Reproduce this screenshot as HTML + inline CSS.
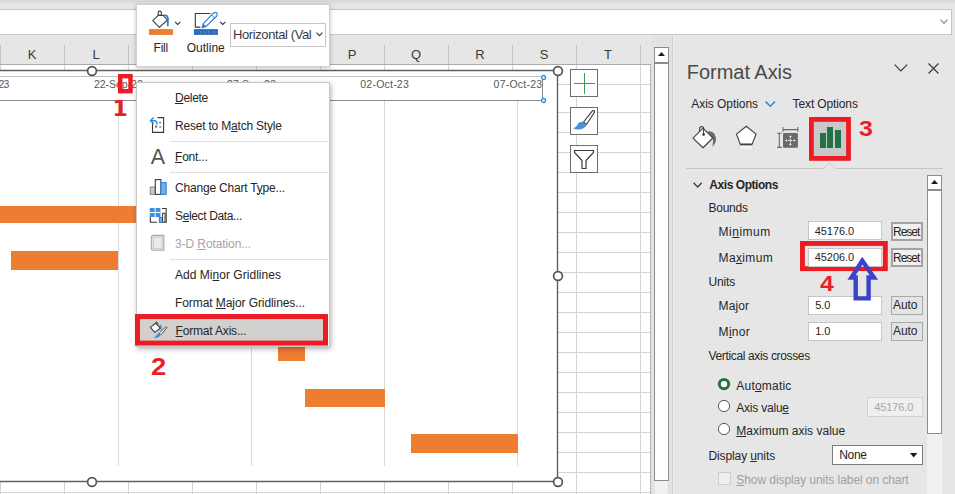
<!DOCTYPE html>
<html><head><meta charset="utf-8"><title>Format Axis</title>
<style>
html,body{margin:0;padding:0;}
body{width:955px;height:494px;overflow:hidden;position:relative;background:#e6e6e6;font-family:"Liberation Sans",sans-serif;}
.t{position:absolute;white-space:pre;}
.r{position:absolute;box-sizing:border-box;}
svg{position:absolute;overflow:visible;}
u{text-decoration:underline;text-underline-offset:1px;text-decoration-thickness:1px;}
</style></head><body>
<div class="r" style="left:0px;top:0px;width:955px;height:2px;background:#d8d8d8;"></div>
<div class="r" style="left:0px;top:2px;width:955px;height:2px;background:#e1e1e1;"></div>
<div class="r" style="left:-2px;top:9px;width:954px;height:26px;background:#fff;border:1px solid #c6c6c6;"></div>
<svg style="left:940px;top:19px" width="8" height="6"><path d="M0.5 0.8 L4 4.3 L7.5 0.8" fill="none" stroke="#9a9a9a" stroke-width="1.3"/></svg>
<div class="r" style="left:0px;top:65px;width:651px;height:429px;background:#fff;"></div>
<div class="r" style="left:0px;top:35px;width:651px;height:29px;background:#e6e6e6;"></div>
<div class="r" style="left:0px;top:64px;width:651px;height:1px;background:#ababab;"></div>
<span class="t" style="left:-118.00px;width:300px;text-align:center;top:45.50px;font-size:13px;line-height:17px;color:#3a3a3a;font-weight:400;">K</span>
<span class="t" style="left:-54.00px;width:300px;text-align:center;top:45.50px;font-size:13px;line-height:17px;color:#3a3a3a;font-weight:400;">L</span>
<span class="t" style="left:10.00px;width:300px;text-align:center;top:45.50px;font-size:13px;line-height:17px;color:#3a3a3a;font-weight:400;">M</span>
<span class="t" style="left:74.00px;width:300px;text-align:center;top:45.50px;font-size:13px;line-height:17px;color:#3a3a3a;font-weight:400;">N</span>
<span class="t" style="left:138.00px;width:300px;text-align:center;top:45.50px;font-size:13px;line-height:17px;color:#3a3a3a;font-weight:400;">O</span>
<span class="t" style="left:202.00px;width:300px;text-align:center;top:45.50px;font-size:13px;line-height:17px;color:#3a3a3a;font-weight:400;">P</span>
<span class="t" style="left:266.00px;width:300px;text-align:center;top:45.50px;font-size:13px;line-height:17px;color:#3a3a3a;font-weight:400;">Q</span>
<span class="t" style="left:330.00px;width:300px;text-align:center;top:45.50px;font-size:13px;line-height:17px;color:#3a3a3a;font-weight:400;">R</span>
<span class="t" style="left:394.00px;width:300px;text-align:center;top:45.50px;font-size:13px;line-height:17px;color:#3a3a3a;font-weight:400;">S</span>
<span class="t" style="left:458.00px;width:300px;text-align:center;top:45.50px;font-size:13px;line-height:17px;color:#3a3a3a;font-weight:400;">T</span>
<div class="r" style="left:0px;top:45px;width:1px;height:19px;background:#c4c4c4;"></div>
<div class="r" style="left:0px;top:65px;width:1px;height:429px;background:#d4d4d4;"></div>
<div class="r" style="left:64px;top:45px;width:1px;height:19px;background:#c4c4c4;"></div>
<div class="r" style="left:64px;top:65px;width:1px;height:429px;background:#d4d4d4;"></div>
<div class="r" style="left:128px;top:45px;width:1px;height:19px;background:#c4c4c4;"></div>
<div class="r" style="left:128px;top:65px;width:1px;height:429px;background:#d4d4d4;"></div>
<div class="r" style="left:192px;top:45px;width:1px;height:19px;background:#c4c4c4;"></div>
<div class="r" style="left:192px;top:65px;width:1px;height:429px;background:#d4d4d4;"></div>
<div class="r" style="left:256px;top:45px;width:1px;height:19px;background:#c4c4c4;"></div>
<div class="r" style="left:256px;top:65px;width:1px;height:429px;background:#d4d4d4;"></div>
<div class="r" style="left:320px;top:45px;width:1px;height:19px;background:#c4c4c4;"></div>
<div class="r" style="left:320px;top:65px;width:1px;height:429px;background:#d4d4d4;"></div>
<div class="r" style="left:384px;top:45px;width:1px;height:19px;background:#c4c4c4;"></div>
<div class="r" style="left:384px;top:65px;width:1px;height:429px;background:#d4d4d4;"></div>
<div class="r" style="left:448px;top:45px;width:1px;height:19px;background:#c4c4c4;"></div>
<div class="r" style="left:448px;top:65px;width:1px;height:429px;background:#d4d4d4;"></div>
<div class="r" style="left:512px;top:45px;width:1px;height:19px;background:#c4c4c4;"></div>
<div class="r" style="left:512px;top:65px;width:1px;height:429px;background:#d4d4d4;"></div>
<div class="r" style="left:576px;top:45px;width:1px;height:19px;background:#c4c4c4;"></div>
<div class="r" style="left:576px;top:65px;width:1px;height:429px;background:#d4d4d4;"></div>
<div class="r" style="left:640px;top:45px;width:1px;height:19px;background:#c4c4c4;"></div>
<div class="r" style="left:640px;top:65px;width:1px;height:429px;background:#d4d4d4;"></div>
<div class="r" style="left:0px;top:84px;width:651px;height:1px;background:#d4d4d4;"></div>
<div class="r" style="left:0px;top:112px;width:651px;height:1px;background:#d4d4d4;"></div>
<div class="r" style="left:0px;top:132px;width:651px;height:1px;background:#d4d4d4;"></div>
<div class="r" style="left:0px;top:152px;width:651px;height:1px;background:#d4d4d4;"></div>
<div class="r" style="left:0px;top:172px;width:651px;height:1px;background:#d4d4d4;"></div>
<div class="r" style="left:0px;top:192px;width:651px;height:1px;background:#d4d4d4;"></div>
<div class="r" style="left:0px;top:212px;width:651px;height:1px;background:#d4d4d4;"></div>
<div class="r" style="left:0px;top:232px;width:651px;height:1px;background:#d4d4d4;"></div>
<div class="r" style="left:0px;top:252px;width:651px;height:1px;background:#d4d4d4;"></div>
<div class="r" style="left:0px;top:272px;width:651px;height:1px;background:#d4d4d4;"></div>
<div class="r" style="left:0px;top:292px;width:651px;height:1px;background:#d4d4d4;"></div>
<div class="r" style="left:0px;top:312px;width:651px;height:1px;background:#d4d4d4;"></div>
<div class="r" style="left:0px;top:332px;width:651px;height:1px;background:#d4d4d4;"></div>
<div class="r" style="left:0px;top:352px;width:651px;height:1px;background:#d4d4d4;"></div>
<div class="r" style="left:0px;top:372px;width:651px;height:1px;background:#d4d4d4;"></div>
<div class="r" style="left:0px;top:392px;width:651px;height:1px;background:#d4d4d4;"></div>
<div class="r" style="left:0px;top:412px;width:651px;height:1px;background:#d4d4d4;"></div>
<div class="r" style="left:0px;top:432px;width:651px;height:1px;background:#d4d4d4;"></div>
<div class="r" style="left:0px;top:452px;width:651px;height:1px;background:#d4d4d4;"></div>
<div class="r" style="left:0px;top:472px;width:651px;height:1px;background:#d4d4d4;"></div>
<div class="r" style="left:0px;top:492px;width:651px;height:1px;background:#d4d4d4;"></div>
<div class="r" style="left:650px;top:64px;width:1px;height:430px;background:#b4b4b4;"></div>
<div class="r" style="left:651px;top:35px;width:21px;height:459px;background:#e3e3e3;"></div>
<div class="r" style="left:654px;top:47px;width:15px;height:16px;background:#fff;border:1px solid #8c8c8c;"></div>
<svg style="left:658px;top:52px" width="7" height="4"><path d="M0 4 L3.5 0 L7 4 Z" fill="#1a1a1a"/></svg>
<div class="r" style="left:654px;top:62px;width:15px;height:419px;background:#fff;border:1px solid #8c8c8c;border-top-width:2px;"></div>
<div class="r" style="left:655px;top:481px;width:13px;height:13px;background:#f1f1f1;"></div>
<div class="r" style="left:668px;top:481px;width:1px;height:13px;background:#dcdcdc;"></div>
<div class="r" style="left:-373px;top:70px;width:931px;height:412px;background:#fff;"></div>
<svg style="left:0;top:60px" width="570" height="434"><path d="M-5 10.5 H557.5 V421.5 H-5" fill="none" stroke="#606060" stroke-width="1.4"/></svg>
<div class="r" style="left:118px;top:100px;width:1px;height:366px;background:#d9d9d9;"></div>
<div class="r" style="left:251px;top:100px;width:1px;height:366px;background:#d9d9d9;"></div>
<div class="r" style="left:384px;top:100px;width:1px;height:366px;background:#d9d9d9;"></div>
<div class="r" style="left:517px;top:100px;width:1px;height:366px;background:#d9d9d9;"></div>
<div class="r" style="left:0px;top:206px;width:140px;height:17px;background:#ed7d31;"></div>
<div class="r" style="left:11px;top:251px;width:107px;height:19px;background:#ed7d31;"></div>
<div class="r" style="left:278px;top:343px;width:27px;height:18px;background:#ed7d31;"></div>
<div class="r" style="left:305px;top:389px;width:80px;height:18px;background:#ed7d31;"></div>
<div class="r" style="left:411px;top:434px;width:107px;height:19px;background:#ed7d31;"></div>
<div class="r" style="left:-300px;top:76px;width:843px;height:25px;border:1px solid #8a8a8a;border-top-color:#c4c4c4;"></div>
<span class="t" style="left:-1.60px;top:77.16px;font-size:10.5px;line-height:14px;color:#595959;font-weight:400;letter-spacing:-0.694px;">23</span>
<span class="t" style="left:94.00px;top:77.16px;font-size:10.5px;line-height:14px;color:#595959;font-weight:400;letter-spacing:-0.039px;">22-Sep-23</span>
<span class="t" style="left:227.00px;top:77.16px;font-size:10.5px;line-height:14px;color:#595959;font-weight:400;letter-spacing:-0.039px;">27-Sep-23</span>
<span class="t" style="left:360.30px;top:77.16px;font-size:10.5px;line-height:14px;color:#595959;font-weight:400;letter-spacing:0.224px;">02-Oct-23</span>
<span class="t" style="left:493.60px;top:77.16px;font-size:10.5px;line-height:14px;color:#595959;font-weight:400;letter-spacing:0.224px;">07-Oct-23</span>
<svg style="left:539.5px;top:73.7px" width="7" height="7"><circle cx="3.5" cy="3.5" r="2" fill="#fff" stroke="#2e8bd8" stroke-width="1.3"/></svg>
<svg style="left:539.5px;top:97.4px" width="7" height="7"><circle cx="3.5" cy="3.5" r="2" fill="#fff" stroke="#2e8bd8" stroke-width="1.3"/></svg>
<svg style="left:86.2px;top:64.5px" width="12" height="12"><circle cx="6" cy="6" r="4.4" fill="#fff" stroke="#555" stroke-width="1.7"/></svg>
<svg style="left:551.5px;top:64.5px" width="12" height="12"><circle cx="6" cy="6" r="4.4" fill="#fff" stroke="#555" stroke-width="1.7"/></svg>
<svg style="left:551.5px;top:269.5px" width="12" height="12"><circle cx="6" cy="6" r="4.4" fill="#fff" stroke="#555" stroke-width="1.7"/></svg>
<svg style="left:86.2px;top:475.5px" width="12" height="12"><circle cx="6" cy="6" r="4.4" fill="#fff" stroke="#555" stroke-width="1.7"/></svg>
<svg style="left:551.5px;top:475.5px" width="12" height="12"><circle cx="6" cy="6" r="4.4" fill="#fff" stroke="#555" stroke-width="1.7"/></svg>
<div class="r" style="left:570px;top:69px;width:28px;height:28px;background:#fff;border:1px solid #6e6e6e;"></div>
<div class="r" style="left:570px;top:107px;width:28px;height:28px;background:#fff;border:1px solid #6e6e6e;"></div>
<div class="r" style="left:570px;top:145px;width:28px;height:28px;background:#fff;border:1px solid #6e6e6e;"></div>
<svg style="left:570px;top:69px" width="28" height="28"><path d="M14.5 4 V25 M4 14.5 H25" stroke="#2ca04a" stroke-width="1" fill="none"/></svg>
<svg style="left:570px;top:107px" width="28" height="28"><path d="M13.5 15 L22.5 3.8 Q24.5 2.8 24.6 5 L16.5 17.5 Z" fill="#fff" stroke="#3a3a3a" stroke-width="1.1"/><path d="M12.8 14.8 L16.6 17.6 Q15.5 21.5 11 22.2 Q6.5 23.2 3 21.2 Q6 20.5 7 18.5 Q8.5 14.5 12.8 14.8 Z" fill="#4a90d9"/></svg>
<svg style="left:570px;top:145px" width="28" height="28"><path d="M4.5 5.5 H23.5 V7.5 L16 15.5 V23.5 H12 V15.5 L4.5 7.5 Z" fill="#fff" stroke="#3a3a3a" stroke-width="1.2"/></svg>
<svg style="left:118.3px;top:74.2px" width="14.700000000000003" height="19.39999999999999"><rect x="2.2" y="2.2" width="10.300000000000002" height="14.999999999999991" fill="none" stroke="#ed1c24" stroke-width="4.4"/></svg>
<span class="t" style="left:112.60px;top:94.48px;font-size:22px;line-height:29px;color:#ed1c24;font-weight:700;font-family:'DejaVu Sans',sans-serif;">1</span>
<div class="r" style="left:136px;top:4px;width:194px;height:63px;background:#fff;border:1px solid #d0d0d0;box-shadow:0 1px 4px rgba(0,0,0,.25);"></div>
<svg style="left:148px;top:9px" width="36" height="28"><path d="M10.2 6.6 V3.6 Q10.2 2.1 11.7 2.1 Q13.3 2.1 13.3 3.6 V7.2" fill="none" stroke="#3b3b3b" stroke-width="1.1"/><path d="M4.8 11.7 L10.2 6.4 L15.4 6.4 L19.3 11 L11.4 18.3 Z" fill="#fff" stroke="#3b3b3b" stroke-width="1.1" stroke-linejoin="round"/><path d="M15.8 6.6 Q19.6 5.4 20 9.8 L19.7 17.2" fill="none" stroke="#2b7cd3" stroke-width="1.7"/><rect x="1" y="20.1" width="24" height="5.8" fill="#ed7d31"/><path d="M27 12.8 L29.7 15.5 L32.4 12.8" fill="none" stroke="#3b3b3b" stroke-width="1.2"/></svg>
<span class="t" style="left:153.60px;top:39.54px;font-size:12px;line-height:16px;color:#262626;font-weight:400;letter-spacing:-0.282px;">Fill</span>
<svg style="left:192px;top:9px" width="36" height="28"><path d="M18.4 4.5 H3.3 V18.1 H8.4" fill="none" stroke="#3b3b3b" stroke-width="1.1"/><path d="M11.3 14.6 L21.6 3.9 Q23.4 2.6 24.8 4 Q26 5.6 24.6 7.2 L14.1 17.4 L10.2 18.6 Z" fill="#fff" stroke="#2b7cd3" stroke-width="1.2" stroke-linejoin="round"/><path d="M10.2 18.6 L11.3 14.6 L14.1 17.4 Z" fill="#2b7cd3"/><path d="M19.6 6 L22.6 9" stroke="#2b7cd3" stroke-width="1"/><rect x="1.9" y="20.1" width="24" height="5.8" fill="#2b6cc4"/><path d="M8 23 h1 M12 23 h1 M16 23 h1 M21.6 23 h1" stroke="#c9a27a" stroke-width="1"/><path d="M28 12.8 L30.7 15.5 L33.4 12.8" fill="none" stroke="#3b3b3b" stroke-width="1.2"/></svg>
<span class="t" style="left:186.80px;top:39.54px;font-size:12px;line-height:16px;color:#262626;font-weight:400;letter-spacing:-0.019px;">Outline</span>
<div class="r" style="left:230px;top:23px;width:96px;height:24px;background:#fff;border:1px solid #c6c6c6;"></div>
<span class="t" style="left:233.00px;top:26.30px;font-size:13px;line-height:17px;color:#3b3b3b;font-weight:400;letter-spacing:-0.400px;">Horizontal (Val</span>
<svg style="left:316px;top:32px" width="7" height="5"><path d="M0.5 0.6 L3.5 3.6 L6.5 0.6" fill="none" stroke="#3b3b3b" stroke-width="1.2"/></svg>
<div class="r" style="left:136px;top:82px;width:194px;height:265px;background:#fff;border:1px solid #c8c8c8;box-shadow:1px 2px 5px rgba(0,0,0,.3);"></div>
<span class="t" style="left:175.00px;top:89.84px;font-size:12px;line-height:16px;color:#262626;font-weight:400;letter-spacing:-0.281px;"><u>D</u>elete</span>
<span class="t" style="left:175.00px;top:118.04px;font-size:12px;line-height:16px;color:#262626;font-weight:400;letter-spacing:-0.201px;">Reset to M<u>a</u>tch Style</span>
<div class="r" style="left:170px;top:141px;width:158px;height:1px;background:#e1e1e1;"></div>
<span class="t" style="left:175.00px;top:149.04px;font-size:12px;line-height:16px;color:#262626;font-weight:400;letter-spacing:-0.217px;"><u>F</u>ont...</span>
<div class="r" style="left:170px;top:172px;width:158px;height:1px;background:#e1e1e1;"></div>
<span class="t" style="left:175.00px;top:179.54px;font-size:12px;line-height:16px;color:#262626;font-weight:400;letter-spacing:-0.193px;">Change Chart T<u>y</u>pe...</span>
<span class="t" style="left:175.00px;top:207.84px;font-size:12px;line-height:16px;color:#262626;font-weight:400;letter-spacing:-0.360px;">S<u>e</u>lect Data...</span>
<span class="t" style="left:175.00px;top:235.84px;font-size:12px;line-height:16px;color:#a6a6a6;font-weight:400;letter-spacing:-0.092px;">3-D <u>R</u>otation...</span>
<div class="r" style="left:170px;top:259px;width:158px;height:1px;background:#e1e1e1;"></div>
<span class="t" style="left:175.00px;top:266.84px;font-size:12px;line-height:16px;color:#262626;font-weight:400;letter-spacing:0.033px;">Add Mi<u>n</u>or Gridlines</span>
<span class="t" style="left:175.00px;top:295.04px;font-size:12px;line-height:16px;color:#262626;font-weight:400;letter-spacing:-0.081px;">Format <u>M</u>ajor Gridlines...</span>
<svg style="left:135.3px;top:314px" width="193.0" height="31.600000000000023"><rect x="2.5" y="2.5" width="188.0" height="26.600000000000023" fill="#d2d0ce" stroke="#ed1c24" stroke-width="5"/></svg>
<span class="t" style="left:175.60px;top:323.04px;font-size:12px;line-height:16px;color:#262626;font-weight:400;letter-spacing:-0.183px;"><u>F</u>ormat Axis...</span>
<svg style="left:146px;top:115px" width="22" height="22"><path d="M6.5 8 V17.4 H17.6 V2.6 H11.6" fill="none" stroke="#3b3b3b" stroke-width="1.1"/><path d="M13.2 7.6 h2 M9.4 12 h1.8 M13.2 12 h2 M9.9 10.2 v2" stroke="#4a4a4a" stroke-width="1"/><path d="M4.4 5.7 H8.6 Q11 5.7 11 9.6 M7.6 2.6 L4.4 5.7 L7.6 8.6" fill="none" stroke="#2b8ae2" stroke-width="1.4"/></svg>
<span class="t" style="left:150.80px;top:142.55px;font-size:21.5px;line-height:28px;color:#555;font-weight:400;">A</span>
<svg style="left:148px;top:178px" width="20" height="20"><rect x="2.3" y="9" width="5" height="7.4" fill="#c8c8c8" stroke="#8a8a8a" stroke-width="1"/><rect x="7.3" y="1.6" width="5.6" height="14.8" fill="#fff" stroke="#3b3b3b" stroke-width="1.1"/><rect x="13" y="4.6" width="5.2" height="11.8" fill="#6db3f2" stroke="#2b7cd3" stroke-width="1"/></svg>
<svg style="left:148px;top:206px" width="20" height="20"><path d="M2.3 11 V16.2 H9 M14 2.5 H18.2 V16.2 H16" fill="none" stroke="#3b3b3b" stroke-width="1.1"/><rect x="1.8" y="2" width="10.6" height="9" fill="#3d8fe0"/><path d="M1.8 6.5 H12.4 M7.1 2 V11" stroke="#fff" stroke-width="1"/><rect x="11.4" y="11.6" width="3" height="4.8" fill="#6db3f2" stroke="#2b7cd3" stroke-width="1"/><rect x="14.6" y="7.2" width="2.4" height="9" fill="#fff" stroke="#3b3b3b" stroke-width="1"/></svg>
<svg style="left:148px;top:234px" width="20" height="20"><path d="M3.3 3.2 Q3.3 1.4 5.2 1.4 H15.8 V16.2 H5.2 Q3.3 16.2 3.3 14.4 Z" fill="#e4e4e4" stroke="#a8a8a8" stroke-width="1.1"/><path d="M5.6 3.2 H14 V14.6 H5.6 Z" fill="#ececec" stroke="#c4c4c4" stroke-width="0.8"/></svg>
<svg style="left:146px;top:320px" width="24" height="22"><path d="M9.8 3.6 Q9.6 1.9 10.8 2 Q12 2.1 11.8 4.6" fill="none" stroke="#3b3b3b" stroke-width="1"/><path d="M4.4 7.4 L9.6 3.2 L14.2 8.2 L8.8 12.4 Z" fill="#fff" stroke="#3b3b3b" stroke-width="1.1" stroke-linejoin="round"/><path d="M13.6 5 Q15.6 6 15 9.6" fill="none" stroke="#2b7cd3" stroke-width="1.3"/><path d="M13.2 13.2 L19.6 7 Q20.8 6.6 20.8 7.8 L15 14.8 Z" fill="#fff" stroke="#3b3b3b" stroke-width="0.9" stroke-linejoin="round"/><path d="M13.2 13.2 L15 14.8 Q13.6 17.4 10.6 17.8 Q8.6 18.2 7.6 17.6 Q10 16.6 10.6 15 Q11.4 13.2 13.2 13.2 Z" fill="#3d8fe0"/></svg>
<span class="t" style="left:150.90px;top:351.08px;font-size:24px;line-height:31px;color:#ed1c24;font-weight:700;transform:scaleX(1.14);transform-origin:left center;">2</span>
<div class="r" style="left:672px;top:35px;width:283px;height:459px;background:#e6e6e6;"></div>
<div class="r" style="left:672px;top:35px;width:1px;height:459px;background:#d0d0d0;"></div>
<div class="r" style="left:673px;top:35px;width:1px;height:459px;background:#efefef;"></div>
<span class="t" style="left:686.80px;top:58.77px;font-size:20px;line-height:26px;color:#4a4a4a;font-weight:400;letter-spacing:-0.034px;">Format Axis</span>
<svg style="left:894px;top:64px" width="14" height="9"><path d="M0.6 0.6 L6.9 7 L13.2 0.6" fill="none" stroke="#3b3b3b" stroke-width="1.2"/></svg>
<svg style="left:927.5px;top:63px" width="11" height="11"><path d="M0.5 0.5 L10.5 10.5 M10.5 0.5 L0.5 10.5" fill="none" stroke="#3b3b3b" stroke-width="1.2"/></svg>
<span class="t" style="left:691.30px;top:95.64px;font-size:12px;line-height:16px;color:#262626;font-weight:400;letter-spacing:-0.055px;">Axis Options</span>
<svg style="left:765px;top:101px" width="11" height="7"><path d="M0.6 0.6 L5.3 5.3 L10 0.6" fill="none" stroke="#2b8ae2" stroke-width="1.5"/></svg>
<span class="t" style="left:792.60px;top:95.64px;font-size:12px;line-height:16px;color:#262626;font-weight:400;letter-spacing:-0.125px;">Text Options</span>
<svg style="left:691px;top:123px" width="28" height="28"><path d="M16.4 8.6 Q21 7.4 23.6 11 Q25.8 14.6 24.7 18.6 Q23.6 21.8 21.5 24 Q22.3 19 21.9 15 Z" fill="#6a6a6a"/><path d="M2 15.1 L12 5.1 L21.9 15 L12 24.8 Z" fill="#fff" stroke="#444" stroke-width="1.2" stroke-linejoin="round"/><path d="M8.6 8.4 V5.6 Q8.6 3.6 10.6 3.6 Q12.6 3.6 12.6 5.6 V11.4" fill="none" stroke="#444" stroke-width="1.1"/><circle cx="12.6" cy="11.6" r="1.35" fill="#444"/></svg>
<svg style="left:734px;top:123px" width="26" height="30"><defs><linearGradient id="pg" x1="0" y1="0" x2="0" y2="1"><stop offset="0" stop-color="#fff"/><stop offset="1" stop-color="#e6e6e6"/></linearGradient></defs><path d="M6.3 22.2 L4.6 27.4 H19.8 L18 22.2 Z" fill="url(#pg)"/><path d="M6.1 22.4 L4.8 26.4 M18.2 22.4 L19.6 26.4" stroke="#cfcfcf" stroke-width="0.8" fill="none"/><path d="M12.3 3.2 L22.1 11.1 L18 21.4 H6.3 L2.5 11.1 Z" fill="#fff" stroke="#444" stroke-width="1.2" stroke-linejoin="round"/><path d="M6.3 21.5 H18" stroke="#444" stroke-width="1.8"/></svg>
<svg style="left:775px;top:124px" width="26" height="26"><path d="M8 3 V7.8 M22.8 3 V7.8 M8 5.6 H22.8" stroke="#6a6a6a" stroke-width="1.1" fill="none"/><path d="M2 9.3 H6.8 M2 23.4 H6.8 M4.3 9.3 V23.4" stroke="#6a6a6a" stroke-width="1.1" fill="none"/><rect x="8" y="9" width="14.9" height="14.8" rx="1" fill="#6a6a6a"/><path d="M15.4 12 V21 M10.9 16.5 H19.9" stroke="#fff" stroke-width="1" stroke-dasharray="1.4 1"/><path d="M14.1 12.9 L15.4 11.3 L16.7 12.9 Z M14.1 20.1 L15.4 21.7 L16.7 20.1 Z M11.8 15.2 L10.2 16.5 L11.8 17.8 Z M19 15.2 L20.6 16.5 L19 17.8 Z" fill="#fff"/></svg>
<svg style="left:809.2px;top:116.9px" width="41.89999999999998" height="43.79999999999998"><rect x="2.4" y="2.4" width="37.09999999999998" height="38.999999999999986" fill="#c8c8c8" stroke="#ed1c24" stroke-width="4.8"/></svg>
<div class="r" style="left:820px;top:133px;width:6px;height:15px;background:#217346;"></div>
<div class="r" style="left:827px;top:127px;width:6px;height:21px;background:#217346;"></div>
<div class="r" style="left:834.5px;top:130px;width:6px;height:18px;background:#217346;"></div>
<span class="t" style="left:859.00px;top:114.75px;font-size:21.5px;line-height:28px;color:#ed1c24;font-weight:700;transform:scaleX(1.16);transform-origin:left center;">3</span>
<svg style="left:686px;top:160px" width="258" height="10"><path d="M0 8.5 H137.5 L143.5 2.5 L149.5 8.5 H257" fill="none" stroke="#c6c6c6" stroke-width="1"/></svg>
<svg style="left:693px;top:181.5px" width="10" height="7"><path d="M0.6 0.8 L4.7 5 L8.8 0.8" fill="none" stroke="#3b3b3b" stroke-width="1.3"/></svg>
<span class="t" style="left:709.30px;top:177.04px;font-size:12px;line-height:16px;color:#262626;font-weight:700;letter-spacing:-0.443px;">Axis Options</span>
<div class="r" style="left:927px;top:175px;width:15px;height:15px;background:#fff;border:1px solid #8c8c8c;"></div>
<svg style="left:931px;top:180px" width="7" height="4"><path d="M0 4 L3.5 0 L7 4 Z" fill="#1a1a1a"/></svg>
<div class="r" style="left:927px;top:189px;width:15px;height:245px;background:#fff;border:1px solid #8c8c8c;border-top-width:2px;"></div>
<div class="r" style="left:927px;top:434px;width:15px;height:60px;background:#f0f0f0;"></div>
<span class="t" style="left:708.50px;top:199.74px;font-size:12px;line-height:16px;color:#262626;font-weight:400;letter-spacing:-0.251px;">Bounds</span>
<span class="t" style="left:718.60px;top:223.64px;font-size:12px;line-height:16px;color:#262626;font-weight:400;letter-spacing:0.475px;">Mi<u>n</u>imum</span>
<span class="t" style="left:718.60px;top:249.84px;font-size:12px;line-height:16px;color:#262626;font-weight:400;letter-spacing:0.355px;">Ma<u>x</u>imum</span>
<span class="t" style="left:708.50px;top:273.84px;font-size:12px;line-height:16px;color:#262626;font-weight:400;letter-spacing:-0.169px;">Units</span>
<span class="t" style="left:718.60px;top:297.84px;font-size:12px;line-height:16px;color:#262626;font-weight:400;letter-spacing:0.077px;">Ma<u>j</u>or</span>
<span class="t" style="left:718.60px;top:323.64px;font-size:12px;line-height:16px;color:#262626;font-weight:400;letter-spacing:0.277px;">M<u>i</u>nor</span>
<div class="r" style="left:808px;top:221px;width:74px;height:19px;background:#fff;border:1px solid #c6c6c6;"></div>
<span class="t" style="left:814.70px;top:224.19px;font-size:11px;line-height:14px;color:#262626;font-weight:400;letter-spacing:-0.038px;">45176.0</span>
<svg style="left:800.3px;top:241.4px" width="87.80000000000007" height="30.099999999999994"><rect x="2.45" y="2.45" width="82.90000000000006" height="25.199999999999996" fill="#e6e6e6" stroke="#ed1c24" stroke-width="4.9"/></svg>
<div class="r" style="left:808px;top:247.5px;width:74px;height:19px;background:#fff;border:1px solid #c6c6c6;"></div>
<span class="t" style="left:814.70px;top:250.39px;font-size:11px;line-height:14px;color:#262626;font-weight:400;letter-spacing:-0.038px;">45206.0</span>
<div class="r" style="left:808px;top:295.5px;width:74px;height:19px;background:#fff;border:1px solid #c6c6c6;"></div>
<span class="t" style="left:815.20px;top:298.19px;font-size:11px;line-height:14px;color:#262626;font-weight:400;letter-spacing:-0.099px;">5.0</span>
<div class="r" style="left:808px;top:321.5px;width:74px;height:19px;background:#fff;border:1px solid #c6c6c6;"></div>
<span class="t" style="left:815.20px;top:324.19px;font-size:11px;line-height:14px;color:#262626;font-weight:400;letter-spacing:-0.099px;">1.0</span>
<div class="r" style="left:891px;top:221.5px;width:31.5px;height:19px;background:#f0f0f0;border:2px solid #a3a3a3;"></div>
<span class="t" style="left:893.00px;top:223.64px;font-size:12px;line-height:16px;color:#262626;font-weight:400;letter-spacing:-0.992px;">Reset</span>
<div class="r" style="left:891px;top:247.5px;width:31.5px;height:19px;background:#f0f0f0;border:2px solid #a3a3a3;"></div>
<span class="t" style="left:893.00px;top:249.84px;font-size:12px;line-height:16px;color:#262626;font-weight:400;letter-spacing:-0.992px;">Reset</span>
<div class="r" style="left:891px;top:295.5px;width:31.5px;height:19px;background:#e3e3e3;border:1px solid #a8a8a8;"></div>
<span class="t" style="left:893.00px;top:297.24px;font-size:12px;line-height:16px;color:#262626;font-weight:400;letter-spacing:-0.047px;">Auto</span>
<div class="r" style="left:891px;top:321.5px;width:31.5px;height:19px;background:#e3e3e3;border:1px solid #a8a8a8;"></div>
<span class="t" style="left:893.00px;top:323.04px;font-size:12px;line-height:16px;color:#262626;font-weight:400;letter-spacing:-0.047px;">Auto</span>
<span class="t" style="left:819.60px;top:270.05px;font-size:21.2px;line-height:28px;color:#ed1c24;font-weight:700;transform:scaleX(1.17);transform-origin:left center;">4</span>
<svg style="left:840px;top:250px" width="50" height="56"><path d="M22.3 10.8 L33.9 27.5 H28.6 V48.4 H15.7 V27.5 H11.5 Z" fill="none" stroke="#3a44c8" stroke-width="4.4" stroke-linejoin="miter" stroke-miterlimit="10"/></svg>
<span class="t" style="left:708.50px;top:348.24px;font-size:12px;line-height:16px;color:#262626;font-weight:400;letter-spacing:-0.353px;">Vertical axis crosses</span>
<svg style="left:717px;top:377px" width="14" height="14"><circle cx="7" cy="7.1" r="4.7" fill="#fff" stroke="#217346" stroke-width="3"/></svg>
<span class="t" style="left:736.30px;top:378.24px;font-size:12px;line-height:16px;color:#262626;font-weight:400;letter-spacing:0.205px;">Aut<u>o</u>matic</span>
<svg style="left:717px;top:399px" width="14" height="14"><circle cx="7" cy="7" r="5.6" fill="#fff" stroke="#5a5a5a" stroke-width="1"/></svg>
<span class="t" style="left:736.30px;top:399.94px;font-size:12px;line-height:16px;color:#262626;font-weight:400;letter-spacing:-0.220px;">Axis valu<u>e</u></span>
<div class="r" style="left:867px;top:397px;width:56px;height:19.5px;background:#efefef;border:1px solid #d2d2d2;"></div>
<span class="t" style="left:874.30px;top:400.19px;font-size:11px;line-height:14px;color:#a6a6a6;font-weight:400;letter-spacing:-0.109px;">45176.0</span>
<svg style="left:717px;top:422.2px" width="14" height="14"><circle cx="7" cy="7" r="5.6" fill="#fff" stroke="#5a5a5a" stroke-width="1"/></svg>
<span class="t" style="left:736.30px;top:423.04px;font-size:12px;line-height:16px;color:#262626;font-weight:400;letter-spacing:0.011px;"><u>M</u>aximum axis value</span>
<span class="t" style="left:708.50px;top:447.54px;font-size:12px;line-height:16px;color:#262626;font-weight:400;letter-spacing:-0.118px;">Display <u>u</u>nits</span>
<div class="r" style="left:832px;top:445.3px;width:91px;height:19.5px;background:#fff;border:1px solid #7a7a7a;"></div>
<span class="t" style="left:839.30px;top:446.54px;font-size:12px;line-height:16px;color:#262626;font-weight:400;letter-spacing:-0.372px;">None</span>
<svg style="left:910px;top:452.9px" width="8" height="5"><path d="M0 0 H7.3 L3.65 4.4 Z" fill="#1a1a1a"/></svg>
<div class="r" style="left:718px;top:472px;width:13px;height:13px;background:#efefef;border:1px solid #cdcdcd;"></div>
<span class="t" style="left:736.30px;top:472.04px;font-size:12px;line-height:16px;color:#a0a0a0;font-weight:400;letter-spacing:-0.075px;"><u>S</u>how display units label on chart</span>
</body></html>
